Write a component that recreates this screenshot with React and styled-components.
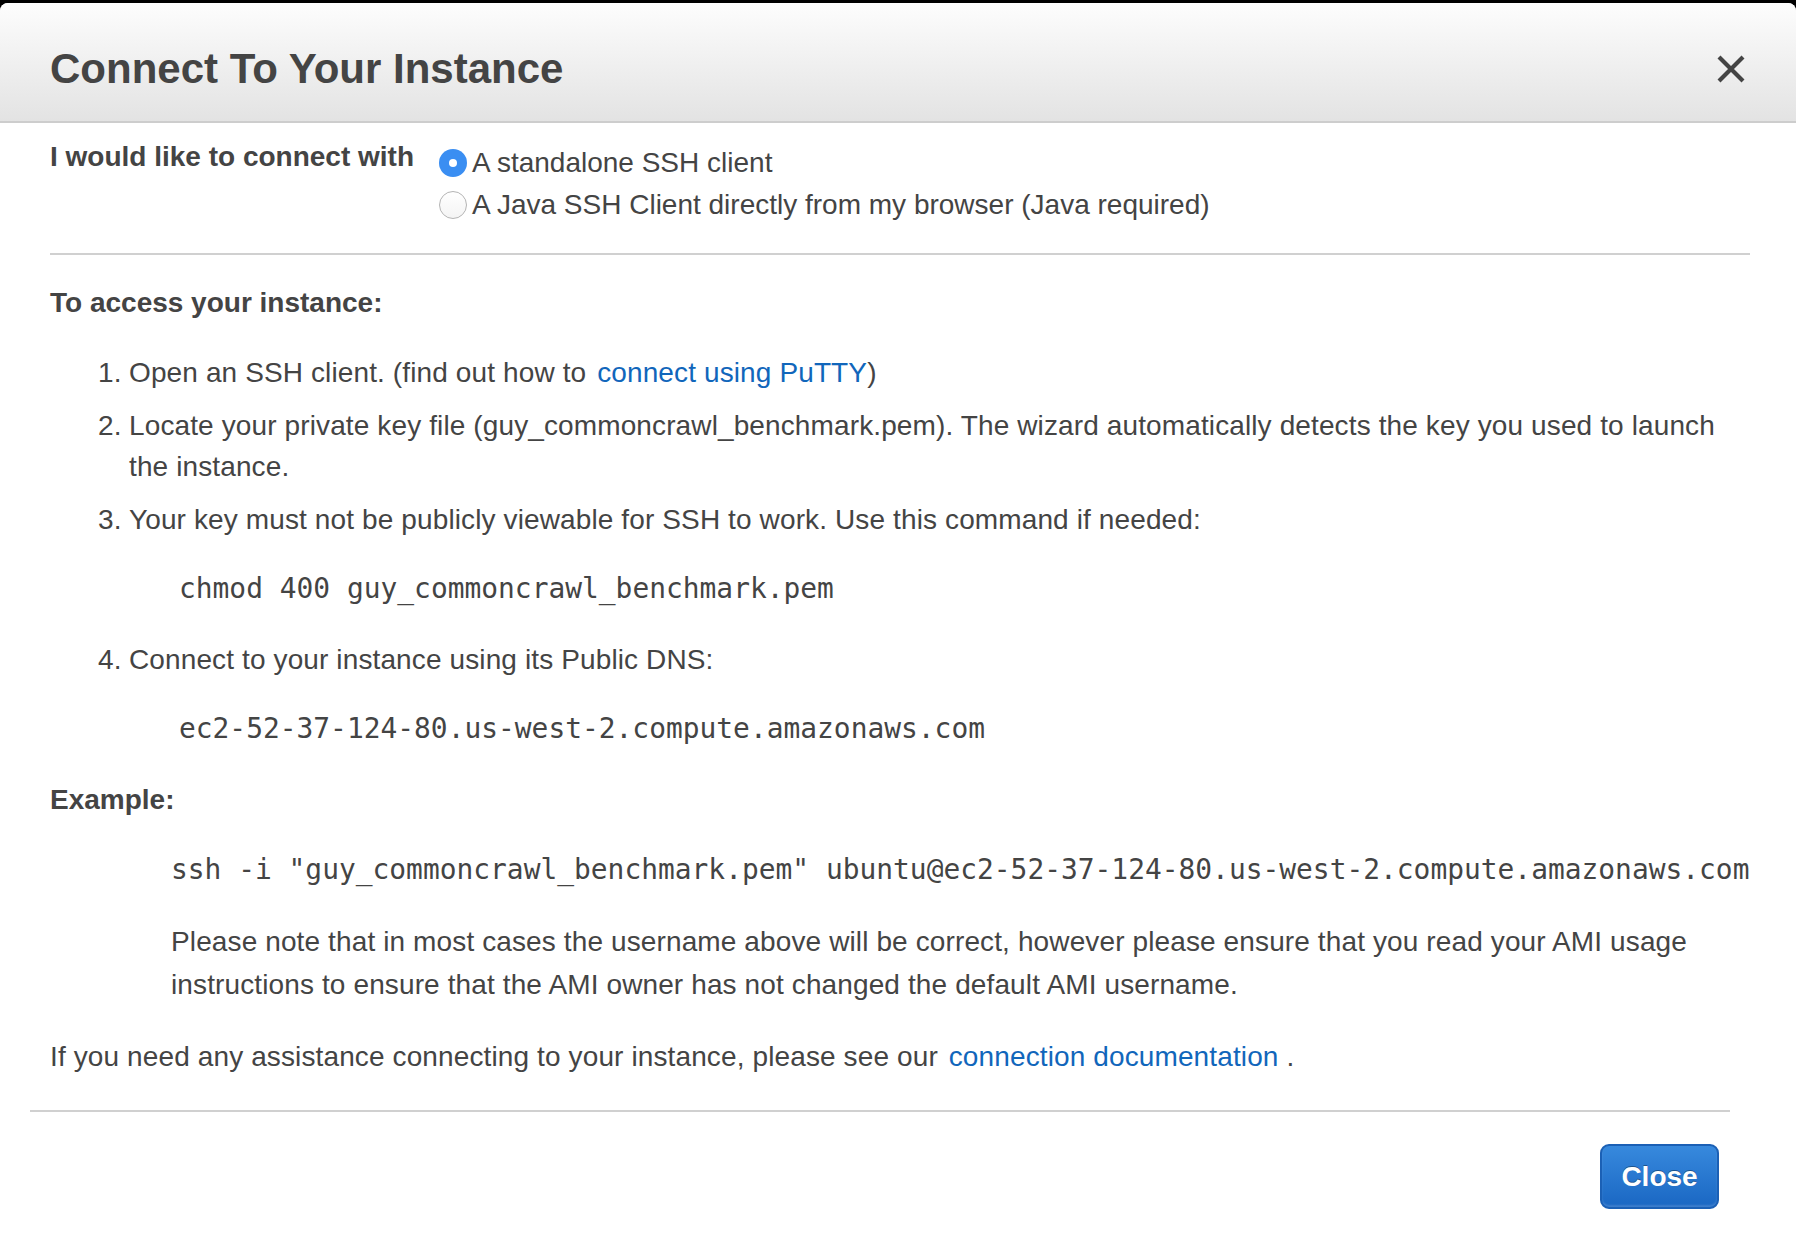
import React from 'react';
import styled, {createGlobalStyle} from 'styled-components';

const GlobalStyle = createGlobalStyle`
  html, body {
    margin: 0;
    padding: 0;
    background: #000;
  }
`

const Modal = styled.div`
  margin-top: 3px;
  min-height: 1245px;
  background: #fff;
  border-radius: 8px 8px 0 0;
  overflow: hidden;
  font-family: "Liberation Sans", Arial, Helvetica, sans-serif;
  color: #444;
`

const Header = styled.header`
  height: 120px;
  box-sizing: border-box;
  padding: 13px 51px 0 50px;
  display: flex;
  align-items: center;
  justify-content: space-between;
  background: linear-gradient(#fdfdfd, #e3e3e3);
  border-bottom: 2px solid #cdcdcd;
`

const Title = styled.h1`
  margin: 0;
  font-size: 42px;
  line-height: 1;
  font-weight: bold;
  color: #444;
`

const CloseX = styled.button`
  width: 28px;
  height: 28px;
  padding: 0;
  border: none;
  background: none;
  cursor: pointer;
  display: flex;
`

const Body = styled.div`
  padding: 0 46px 0 50px;
  font-size: 28px;
  letter-spacing: 0.12px;
`

const ConnectRow = styled.div`
  display: grid;
  grid-template-columns: 389px 1fr;
  padding-top: 19px;
`

const Label = styled.div`
  font-weight: bold;
  line-height: 42px;
  letter-spacing: 0;
  margin-top: -6px;
`

const RadioList = styled.div`
  display: flex;
  flex-direction: column;
  letter-spacing: 0;
`

const RadioOption = styled.label`
  display: flex;
  align-items: center;
  gap: 5px;
  line-height: 42px;
  cursor: pointer;
`

const RadioDot = styled.span`
  width: 28px;
  height: 28px;
  box-sizing: border-box;
  border-radius: 50%;
  flex-shrink: 0;
  display: flex;
  align-items: center;
  justify-content: center;
  background: ${props => props.$checked ? '#3a8ef2' : 'linear-gradient(#fff, #f4f4f4)'};
  border: ${props => props.$checked ? 'none' : '1.5px solid #b4b4b4'};

  &::after {
    content: "";
    display: ${props => props.$checked ? 'block' : 'none'};
    width: 8px;
    height: 8px;
    border-radius: 50%;
    background: #fff;
  }
`

const Divider = styled.div`
  height: 2px;
  background: #d0d0d0;
  margin-top: ${props => props.$top || 0}px;
`

const SectionTitle = styled.h2`
  margin: ${props => props.$top || 0}px 0 0;
  font-size: 28px;
  font-weight: bold;
  line-height: 42px;
  letter-spacing: 0;
`

const Steps = styled.ol`
  list-style: none;
  margin: 28px 0 0;
  padding: 0 0 0 48px;
`

const Step = styled.li`
  display: grid;
  grid-template-columns: 31px 1fr;
  line-height: 41px;
  margin-bottom: 12px;
`

const Code = styled.div`
  font-family: "DejaVu Sans Mono", "Liberation Mono", monospace;
  font-size: 27.9px;
  line-height: 41px;
  letter-spacing: 0;
  white-space: nowrap;
  margin: 28px 0 ${props => props.$bottom || 0}px ${props => props.$indent}px;
`

const Note = styled.p`
  margin: 30px 0 0 121px;
  line-height: 43px;
`

const Help = styled.p`
  margin: 30px 0 0;
  line-height: 42px;
`

const Link = styled.a`
  color: #1166bb;
  text-decoration: none;
  margin-left: 3px;
  cursor: pointer;
`

const Footer = styled.footer`
  padding: 0 66px 0 30px;
`

const ButtonRow = styled.div`
  display: flex;
  justify-content: flex-end;
  padding: 32px 11px 0 0;
`

const PrimaryBtn = styled.button`
  width: 119px;
  height: 65px;
  box-sizing: border-box;
  border: 2px solid #1b60b5;
  border-radius: 9px;
  background: linear-gradient(#3789dd, #1a67c3);
  box-shadow: inset 0 -2px 2px rgba(255, 255, 255, 0.15);
  color: #fff;
  font-family: "Liberation Sans", Arial, Helvetica, sans-serif;
  font-size: 28px;
  font-weight: bold;
  text-shadow: 0 -1px 0 rgba(0, 0, 0, 0.35);
  cursor: pointer;
`

const dns = 'ec2-52-37-124-80.us-west-2.compute.amazonaws.com'
const keyFile = 'guy_commoncrawl_benchmark.pem'

export default function App() {
  return (
    <>
      <GlobalStyle/>
      <Modal>
        <Header>
          <Title>Connect To Your Instance</Title>
          <CloseX aria-label="Close">
            <svg width="28" height="28" viewBox="0 0 28 28">
              <path d="M2 2 L26 26 M26 2 L2 26" stroke="#444" strokeWidth="4.2" strokeLinecap="butt"/>
            </svg>
          </CloseX>
        </Header>

        <Body>
          <ConnectRow>
            <Label>I would like to connect with</Label>
            <RadioList>
              <RadioOption><RadioDot $checked/>A standalone SSH client</RadioOption>
              <RadioOption><RadioDot/>A Java SSH Client directly from my browser (Java required)</RadioOption>
            </RadioList>
          </ConnectRow>

          <Divider $top={27}/>

          <SectionTitle $top={27}>To access your instance:</SectionTitle>
          <Steps>
            <Step>
              <span>1.</span>
              <div>Open an SSH client. (find out how to <Link>connect using PuTTY</Link>)</div>
            </Step>
            <Step>
              <span>2.</span>
              <div>Locate your private key file ({keyFile}). The wizard automatically detects the key you used to launch the instance.</div>
            </Step>
            <Step>
              <span>3.</span>
              <div>
                Your key must not be publicly viewable for SSH to work. Use this command if needed:
                <Code $indent={50} $bottom={18}>chmod 400 {keyFile}</Code>
              </div>
            </Step>
            <Step>
              <span>4.</span>
              <div>
                Connect to your instance using its Public DNS:
                <Code $indent={50} $bottom={18}>{dns}</Code>
              </div>
            </Step>
          </Steps>

          <SectionTitle $top={4}>Example:</SectionTitle>
          <Code $indent={121}>ssh -i "{keyFile}" ubuntu@{dns}</Code>
          <Note>
            Please note that in most cases the username above will be correct, however please ensure that you read your AMI usage instructions to ensure that the AMI owner has not changed the default AMI username.
          </Note>
          <Help>
            If you need any assistance connecting to your instance, please see our <Link>connection documentation</Link> .
          </Help>
        </Body>

        <Footer>
          <Divider $top={32}/>
          <ButtonRow>
            <PrimaryBtn>Close</PrimaryBtn>
          </ButtonRow>
        </Footer>
      </Modal>
    </>
  );
}
